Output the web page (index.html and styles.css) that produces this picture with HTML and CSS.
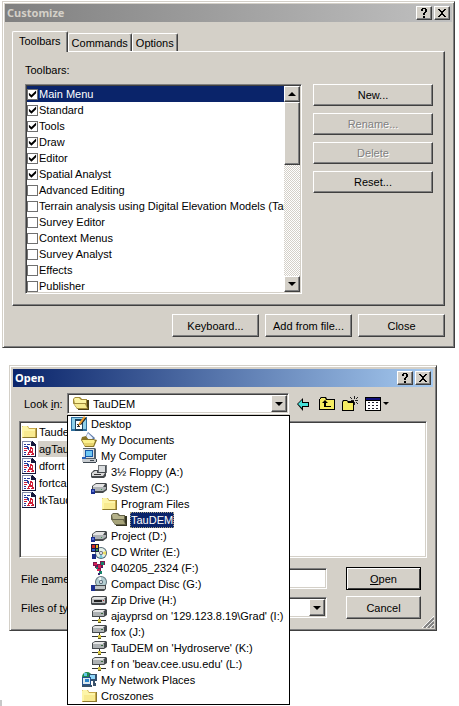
FILE: index.html
```html
<!DOCTYPE html>
<html lang="en">
<head>
<meta charset="utf-8">
<title>Customize toolbars</title>
<link rel="stylesheet" href="styles.css">
</head>
<body>
<svg class="sprite" aria-hidden="true">
  <symbol id="folder" viewBox="0 0 16 16">
    <path fill="#c9a94a" d="M1 2h6l1 2h7v10H1z"/>
    <path fill="#fdf5a8" d="M1 3l1-1h4l2 3h6v8H1z"/>
    <path fill="#f8ea90" d="M3 7h11v6H3z"/>
    <path fill="#8b7a30" d="M2 14h13v-1H2zM15 4h1v10h-1z"/>
  </symbol>
  <symbol id="folder-open" viewBox="0 0 16 16">
    <path fill="#a08a3a" d="M0 3l2-2h5l2 2h5v8H3L0 7z"/>
    <path fill="#fbf3a2" d="M1 3l1-1h4l2 2h5v4H2z"/>
    <path fill="#4a3f14" d="M14 4h2v10H5v-1h9z"/>
    <path fill="#a08a3a" d="M0 7h13l2 6H4z"/>
    <path fill="#f6ea8e" d="M1 8h11l2 4H4z"/>
  </symbol>
  <symbol id="folder-selected" viewBox="0 0 16 16">
    <path fill="#66644a" d="M0 3l2-2h5l2 2h5v8H3L0 7z"/>
    <path fill="#b5b28a" d="M1 3l1-1h4l2 2h5v4H2z"/>
    <path fill="#33321f" d="M14 4h2v10H5v-1h9z"/>
    <path fill="#66644a" d="M0 7h13l2 6H4z"/>
    <path fill="#a7a47a" d="M1 8h11l2 4H4z"/>
  </symbol>
  <symbol id="desktop" viewBox="0 0 16 16">
    <path fill="#2e6f9e" d="M0 1h16v14H0z"/>
    <path fill="#8fd0ea" d="M1 2h14v11H1z"/>
    <path fill="#1d4461" d="M4 3h8v12H4z"/>
    <path fill="#fff" d="M5 5h6v8H5z"/>
    <path fill="#333" d="M6 8h3v1H6zM6 10h3v1H6z"/>
    <path fill="#f0a030" d="M13 0l2 2-6 7-2 1 1-3z"/>
    <path fill="#222" d="M7 9h1v1H7zM14 2h1v1l-5 6H9z"/>
  </symbol>
  <symbol id="documents" viewBox="0 0 16 16">
    <path fill="#5d7aa8" d="M7 0l7 6-3 5-7-5z"/>
    <path fill="#eef4ff" d="M7 1l5 5-3 3-4-4z"/>
    <path fill="#8a7628" d="M1 5l4-1 2 3h5l4 1-3 7H4L0 8z"/>
    <path fill="#fbf08c" d="M1 8h12l1 1-2 5H4z"/>
    <path fill="#e6d26c" d="M3 11h10l-1 3H4z"/>
  </symbol>
  <symbol id="computer" viewBox="0 0 16 16">
    <path fill="#55606b" d="M2 0h12l1 1v10H2z"/>
    <path fill="#d8dde0" d="M2 1h11v9H2z"/>
    <path fill="#1658a8" d="M4 2h8v7H4z"/>
    <path fill="#6ec8f4" d="M5 3h6v5H5z"/>
    <path fill="#c8ccd0" d="M1 11h14v3H1z"/>
    <path fill="#3c464f" d="M2 14h13v1H2zM15 11h1v3h-1zM9 12h4v1H9z"/>
    <path fill="#2a61ba" d="M1 9h4v2H1z"/>
  </symbol>
  <symbol id="floppy" viewBox="0 0 16 16">
    <path fill="#707478" d="M7 1h9v8H7z"/>
    <path fill="#d9dcde" d="M8 2h6v6H8z"/>
    <path fill="#4a5056" d="M14 2h1v6h-1z"/>
    <path fill="#45494c" d="M0 9l3-3h4v2h8v4l-2 2H1l-1-1z"/>
    <path fill="#d8d8d8" d="M1 9l3-2h2v2h8l-2 3H1z"/>
    <path fill="#333" d="M3 10h7v1H3z"/>
  </symbol>
  <symbol id="disk" viewBox="0 0 16 16">
    <path fill="#45494c" d="M1 6l4-3h10l1 1v6l-4 3H1z"/>
    <path fill="#e4e4e4" d="M2 6l3-2h9l-2 3H2z"/>
    <path fill="#aeb2b5" d="M2 7h13v2l-3 2H2z"/>
    <path fill="#1b2f90" d="M0 9h4v5H0z"/>
    <path fill="#596fcf" d="M1 10h2v2H1z"/>
    <path fill="#3f9f51" d="M10 9h1v1h-1z"/>
  </symbol>
  <symbol id="cdwriter" viewBox="0 0 16 16">
    <circle cx="10" cy="9" r="6" fill="#556a78"/>
    <circle cx="10" cy="9" r="5" fill="#e5f0e7"/>
    <path fill="#e8dc63" d="M10 9l5-2v4z"/>
    <path fill="#77c9d7" d="M10 9l2 5H8z"/>
    <circle cx="10" cy="9" r="2" fill="#667"/>
    <circle cx="10" cy="9" r="1" fill="#fff"/>
    <path fill="#161b3d" d="M0 0h8v8H0z"/>
    <path fill="#d42a24" d="M1 1h3v3H1z"/>
    <path fill="#edb528" d="M5 1h2v3H5z"/>
    <path fill="#315bcc" d="M1 5h3v2H1z"/>
    <path fill="#2d934b" d="M5 5h2v2H5z"/>
    <path fill="#172b87" d="M1 10h4v5H1z"/>
  </symbol>
  <symbol id="volume" viewBox="0 0 16 16">
    <path fill="#7a174e" d="M2 2h4v2h3V1h5v4h-2v3h-2v3H7V8H4V6H2z"/>
    <path fill="#d82052" d="M3 3h3v2H3zM7 5h3v3H7zM6 9h3v2H6z"/>
    <path fill="#17826a" d="M10 2h3v3h-3zM5 7h2v2H5zM8 11h3v3H8z"/>
    <path fill="#37256d" d="M6 5h1v2H6zM10 7h2v1h-2zM7 13h2v2H7z"/>
  </symbol>
  <symbol id="compact" viewBox="0 0 16 16">
    <circle cx="10" cy="6" r="6" fill="#60747d"/>
    <circle cx="10" cy="6" r="5" fill="#b4ced2"/>
    <path fill="#f0f5f5" d="M10 6l-3-4 3-1z"/>
    <circle cx="10" cy="6" r="2" fill="#567"/>
    <circle cx="10" cy="6" r="1" fill="#fff"/>
    <path fill="#45494c" d="M2 9h13v4l-2 2H2z"/>
    <path fill="#bfc4c6" d="M3 10h11v3H3z"/>
    <path fill="#1b2f90" d="M0 9h4v6H0z"/>
  </symbol>
  <symbol id="zip" viewBox="0 0 16 16">
    <path fill="#45494c" d="M0 6l2-2h13l1 1v6l-2 2H1l-1-1z"/>
    <path fill="#e4e4e4" d="M1 6l2-1h12l-2 2H1z"/>
    <path fill="#b8bbbd" d="M1 7h13v4H1z"/>
    <path fill="#222" d="M3 8h8v2H3z"/>
    <path fill="#b33" d="M12 8h1v1h-1z"/>
  </symbol>
  <symbol id="netdrive" viewBox="0 0 16 16">
    <path fill="#45494c" d="M1 3l3-2h11l1 1v5l-3 2H1z"/>
    <path fill="#e6e6e6" d="M2 3l2-1h10l-2 2H2z"/>
    <path fill="#adb1b3" d="M2 4h11v4H2z"/>
    <path fill="#3a6b3e" d="M10 5h2v1h-2z"/>
    <path fill="#333" d="M8 9h1v3H8zM1 12h14v1H1z"/>
    <path fill="#d5c540" d="M7 11h3v3H7z"/>
    <path fill="#5c5520" d="M7 14h3v1H7z"/>
  </symbol>
  <symbol id="network" viewBox="0 0 16 16">
    <circle cx="6" cy="5" r="5" fill="#1f8a50"/>
    <path fill="#62c8e8" d="M3 1h3v3H3z"/>
    <path fill="#33506e" d="M8 2h8v7H8z"/>
    <path fill="#8ed6f8" d="M9 3h5v4H9z"/>
    <path fill="#23528d" d="M1 5h9v8H1z"/>
    <path fill="#d9e7ef" d="M2 6h7v6H2z"/>
    <path fill="#2984ca" d="M4 7h4v3H4z"/>
    <path fill="#38516a" d="M1 13h10v2H1zM12 9h2v2h1v3h-3z"/>
  </symbol>
  <symbol id="file" viewBox="0 0 16 16">
    <path fill="#8088a8" d="M1 0h10v1H2v14H1z"/>
    <path fill="#fff" d="M2 1h9v3h3v11H2z"/>
    <path fill="#15183c" d="M11 0h1v1h1v1h1v1h1v13H1v-1h13V5h-4V1h1z"/>
    <path fill="#283c9c" d="M3 3h2v1H3zM6 3h3v1H6zM3 5h4v1H3zM3 11h2v1H3zM3 13h2v1H3z"/>
    <path fill="#d01f38" d="M3 7h3v1H3zM3 9h3v1H3z"/>
    <path fill="#283c9c" d="M6 6h2v2H6zM7 8h1v1H7z"/>
    <path fill="#d01f38" d="M9 6h2v1h1v5h1v2h-3v-1h1v-1H8v1h1v1H6v-1h1v-2h1V9h1z"/>
    <path fill="#fff" d="M10 8h1v2h-1z"/>
  </symbol>
  <symbol id="back" viewBox="0 0 16 16">
    <path fill="#000" d="M1 8l6-6v4h6v5H7v4z"/>
    <path fill="#45e0da" d="M2 8l4-4v3h6v3H6v2z"/>
  </symbol>
  <symbol id="up" viewBox="0 0 16 16">
    <path fill="#000" d="M1 2l1-1h5l1 2h8v11H0V3h1z"/>
    <path fill="#f5ec62" d="M2 2h4l1 2h8v9H1V3h1z"/>
    <path fill="#000" d="M3 7l3-3 3 3H7v3h5v1H5V7z"/>
  </symbol>
  <symbol id="newfolder" viewBox="0 0 16 16">
    <path fill="#000" d="M0 6l1-2h4l1 1h6v10H0z"/>
    <path fill="#f5ec62" d="M1 6l1-1h3l1 2h5v7H1z"/>
    <path fill="#222" d="M12 0h1v3h-1zM8 1h1v1H8zM9 2h1v1H9zM15 1h1v1h-1zM14 2h1v1h-1zM13 4h3v1h-3zM9 4h3v1H9zM12 6h1v3h-1zM14 6h1v1h-1zM15 7h1v1h-1z"/>
  </symbol>
  <symbol id="views" viewBox="0 0 16 16">
    <path fill="#000" d="M0 1h16v14H0z"/>
    <path fill="#10107a" d="M1 2h14v2H1z"/>
    <path fill="#fff" d="M1 5h14v9H1z"/>
    <path fill="#223" d="M3 6h2v1H3zM7 6h2v1H7zM11 6h2v1h-2zM3 9h2v1H3zM7 9h2v1H7zM11 9h2v1h-2zM3 12h2v1H3zM7 12h2v1H7zM11 12h2v1h-2z"/>
  </symbol>
  <symbol id="help" viewBox="0 0 12 12">
    <path fill="#000" d="M3 2h1V1h4v1h1v3H8v1H7v2H5V6h1V5h1V2H5v2H3zM5 9h2v2H5z"/>
  </symbol>
  <symbol id="close" viewBox="0 0 12 12">
    <path fill="#000" d="M2 2h2v1h1v1h2V3h1V2h2v1H9v1H8v1H7v2h1v1h1v1h1v1H8V9H7V8H5v1H4v1H2V9h1V8h1V7h1V5H4V4H3V3H2z"/>
  </symbol>
</svg>

<section class="dialog customize" aria-label="Customize">
  <header class="titlebar inactive">
    <h1>Customize</h1>
    <button class="caption" aria-label="Help"><svg><use href="#help"/></svg></button>
    <button class="caption" aria-label="Close window"><svg><use href="#close"/></svg></button>
  </header>
  <div class="customize-body">
    <div class="tabs" role="tablist">
      <button class="tab active" role="tab" aria-selected="true">Toolbars</button>
      <button class="tab" role="tab">Commands</button>
      <button class="tab" role="tab">Options</button>
    </div>
    <div class="panel" role="tabpanel">
      <p class="caption-text">Toolbars:</p>
      <div class="panel-row">
        <div class="listbox">
          <div class="checks">
            <label class="current"><input type="checkbox" checked>Main Menu</label>
            <label><input type="checkbox" checked>Standard</label>
            <label><input type="checkbox" checked>Tools</label>
            <label><input type="checkbox" checked>Draw</label>
            <label><input type="checkbox" checked>Editor</label>
            <label><input type="checkbox" checked>Spatial Analyst</label>
            <label><input type="checkbox">Advanced Editing</label>
            <label><input type="checkbox">Terrain analysis using Digital Elevation Models (TauDEM)</label>
            <label><input type="checkbox">Survey Editor</label>
            <label><input type="checkbox">Context Menus</label>
            <label><input type="checkbox">Survey Analyst</label>
            <label><input type="checkbox">Effects</label>
            <label><input type="checkbox">Publisher</label>
          </div>
          <div class="scrollbar">
            <button class="arrow up" aria-label="Scroll up"></button>
            <div class="thumb"></div>
            <button class="arrow down" aria-label="Scroll down"></button>
          </div>
        </div>
        <div class="side-buttons">
          <button class="btn">New...</button>
          <button class="btn" disabled>Rename...</button>
          <button class="btn" disabled>Delete</button>
          <button class="btn">Reset...</button>
        </div>
      </div>
    </div>
    <footer class="actions">
      <button class="btn">Keyboard...</button>
      <button class="btn">Add from file...</button>
      <button class="btn">Close</button>
    </footer>
  </div>
</section>

<section class="dialog open" aria-label="Open">
  <header class="titlebar">
    <h1>Open</h1>
    <button class="caption" aria-label="Help"><svg><use href="#help"/></svg></button>
    <button class="caption" aria-label="Close window"><svg><use href="#close"/></svg></button>
  </header>
  <div class="open-body">
    <div class="look-row">
      <label for="look">Look <u>i</u>n:</label>
      <div class="combo look">
        <svg class="icon"><use href="#folder-open"/></svg>
        <select id="look"><option>TauDEM</option></select>
        <span class="arrow down"></span>
        <ul class="popup" role="listbox" aria-label="Folders">
          <li role="option"><svg class="icon"><use href="#desktop"/></svg><span>Desktop</span></li>
          <li class="l1" role="option"><svg class="icon"><use href="#documents"/></svg><span>My Documents</span></li>
          <li class="l1" role="option"><svg class="icon"><use href="#computer"/></svg><span>My Computer</span></li>
          <li class="l2" role="option"><svg class="icon"><use href="#floppy"/></svg><span>3½ Floppy (A:)</span></li>
          <li class="l2" role="option"><svg class="icon"><use href="#disk"/></svg><span>System (C:)</span></li>
          <li class="l3" role="option"><svg class="icon"><use href="#folder"/></svg><span>Program Files</span></li>
          <li class="l4" role="option" aria-selected="true"><svg class="icon"><use href="#folder-selected"/></svg><span>TauDEM</span></li>
          <li class="l2" role="option"><svg class="icon"><use href="#disk"/></svg><span>Project (D:)</span></li>
          <li class="l2" role="option"><svg class="icon"><use href="#cdwriter"/></svg><span>CD Writer (E:)</span></li>
          <li class="l2" role="option"><svg class="icon"><use href="#volume"/></svg><span>040205_2324 (F:)</span></li>
          <li class="l2" role="option"><svg class="icon"><use href="#compact"/></svg><span>Compact Disc (G:)</span></li>
          <li class="l2" role="option"><svg class="icon"><use href="#zip"/></svg><span>Zip Drive (H:)</span></li>
          <li class="l2" role="option"><svg class="icon"><use href="#netdrive"/></svg><span>ajayprsd on '129.123.8.19\Grad' (I:)</span></li>
          <li class="l2" role="option"><svg class="icon"><use href="#netdrive"/></svg><span>fox (J:)</span></li>
          <li class="l2" role="option"><svg class="icon"><use href="#netdrive"/></svg><span>TauDEM on 'Hydroserve' (K:)</span></li>
          <li class="l2" role="option"><svg class="icon"><use href="#netdrive"/></svg><span>f on 'beav.cee.usu.edu' (L:)</span></li>
          <li class="l1" role="option"><svg class="icon"><use href="#network"/></svg><span>My Network Places</span></li>
          <li class="l1" role="option"><svg class="icon"><use href="#folder"/></svg><span>Croszones</span></li>
        </ul>
      </div>
      <div class="tools">
        <button aria-label="Back"><svg class="icon"><use href="#back"/></svg></button>
        <button aria-label="Up one level"><svg class="icon"><use href="#up"/></svg></button>
        <button aria-label="New folder"><svg class="icon"><use href="#newfolder"/></svg></button>
        <button class="menu" aria-label="Views"><svg class="icon"><use href="#views"/></svg></button>
      </div>
    </div>
    <ul class="files">
      <li><svg class="icon"><use href="#folder"/></svg><span>Taude</span></li>
      <li class="marked"><svg class="icon"><use href="#file"/></svg><span>agTau</span></li>
      <li><svg class="icon"><use href="#file"/></svg><span>dforrt</span></li>
      <li><svg class="icon"><use href="#file"/></svg><span>fortca</span></li>
      <li><svg class="icon"><use href="#file"/></svg><span>tkTaud</span></li>
    </ul>
    <div class="form">
      <label for="name">File <u>n</u>ame:</label>
      <input id="name" type="text">
      <button class="btn default"><u>O</u>pen</button>
      <label for="type">Files of <u>t</u>ype:</label>
      <div class="combo">
        <select id="type"><option></option></select>
        <span class="arrow down"></span>
      </div>
      <button class="btn">Cancel</button>
    </div>
  </div>
  <svg class="grip" viewBox="0 0 12 12" aria-hidden="true">
    <path stroke="#fff" d="M0 12L12 0M4 12l8-8M8 12l4-4"/>
    <path stroke="#808080" stroke-width="2" d="M2 12L12 2M6 12l6-6M10 12l2-2"/>
  </svg>
</section>
</body>
</html>
```
FILE: styles.css
```css
* {
  box-sizing: border-box;
}

body {
  min-height: 100vh;
  margin: 0;
  padding: 1px 4px 0 2px;
  background: #fff linear-gradient(#c8c8c8, #c8c8c8) left bottom / 2px 6px no-repeat;
  color: #000;
  font: 11px/16px "Liberation Sans", Arial, sans-serif;
}

button,
input,
select {
  font: inherit;
  color: inherit;
  margin: 0;
  border-radius: 0;
}

ul {
  list-style: none;
  margin: 0;
  padding: 0;
}

.sprite {
  position: absolute;
  width: 0;
  height: 0;
}

.icon {
  width: 16px;
  height: 16px;
  flex: none;
  display: block;
}

/* Window frame */
.dialog {
  background: #d4d0c8;
  border: 1px solid;
  border-color: #d4d0c8 #404040 #404040 #d4d0c8;
  box-shadow: inset 1px 1px #fff, inset -1px -1px #808080;
  padding: 2px;
}

.titlebar {
  display: flex;
  align-items: center;
  gap: 2px;
  height: 18px;
  padding: 0 2px;
  background: linear-gradient(90deg, #0a246a, #a6caf0);
  color: #fff;
}

.titlebar.inactive {
  background: linear-gradient(90deg, #808080, #c0c0c0);
  color: #d4d0c8;
}

.titlebar h1 {
  flex: 1;
  margin: 0;
  font: bold 11px/16px "Noto Sans", Tahoma, sans-serif;
}

.caption {
  width: 16px;
  height: 14px;
  padding: 0;
  display: grid;
  place-items: center;
}

.caption svg {
  width: 12px;
  height: 12px;
}

/* Raised surfaces */
.btn,
.caption,
.arrow,
.thumb {
  background: #d4d0c8;
  border: 1px solid;
  border-color: #fff #404040 #404040 #fff;
  box-shadow: inset -1px -1px #808080;
}

.btn {
  height: 22px;
  padding: 0;
}

.btn:disabled {
  color: #808080;
  text-shadow: 1px 1px #fff;
}

.btn.default {
  border-color: #000;
  box-shadow: inset 1px 1px #fff, inset -1px -1px #404040;
}

.arrow {
  width: 16px;
  height: 16px;
  padding: 0;
  display: grid;
  place-items: center;
}

.arrow::before {
  content: "";
  border: 4px solid transparent;
  border-bottom-width: 0;
  border-top-color: #000;
}

.arrow.up::before {
  border-width: 0 4px 4px;
  border-bottom-color: #000;
}

/* Sunken surfaces */
.listbox,
.files,
.combo,
.form input {
  background: #fff;
  border: 1px solid;
  border-color: #808080 #fff #fff #808080;
  box-shadow: inset 1px 1px #404040, inset -1px -1px #d4d0c8;
}

/* Customize dialog */
.customize-body {
  padding: 9px 7px 8px;
}

.tabs {
  display: flex;
  align-items: flex-end;
}

.tab {
  height: 18px;
  padding: 0 3px;
  background: #d4d0c8;
  border: 1px solid;
  border-color: #fff #404040 transparent #fff;
  border-bottom: 0;
  border-radius: 2px 2px 0 0;
  box-shadow: inset -1px 0 #808080;
}

.tab.active {
  height: 21px;
  padding: 0 6px 2px;
  margin-bottom: -1px;
  z-index: 1;
}

.panel {
  border: 1px solid;
  border-color: #fff #404040 #404040 #fff;
  box-shadow: inset -1px -1px #808080;
  padding: 10px 11px 11px 12px;
}

.caption-text {
  margin: 0 0 6px;
}

.panel-row {
  display: flex;
  gap: 11px;
}

.listbox {
  flex: 1;
  min-width: 0;
  height: 210px;
  padding: 1px;
  display: flex;
}

.checks {
  flex: 1;
  min-width: 0;
  overflow: hidden;
}

.checks label {
  display: flex;
  align-items: center;
  gap: 1px;
  height: 16px;
  white-space: nowrap;
}

.checks .current {
  background: #0a246a;
  color: #fff;
}

.checks input {
  appearance: none;
  flex: none;
  width: 11px;
  height: 11px;
  background: #fff;
  border: 1px solid #707070;
}

.checks input:checked::before {
  content: "";
  display: block;
  width: 9px;
  height: 9px;
  background: #000;
  clip-path: polygon(10% 35%, 38% 60%, 90% 10%, 90% 42%, 38% 92%, 10% 65%);
}

.scrollbar {
  width: 16px;
  display: flex;
  flex-direction: column;
  background: repeating-conic-gradient(#fff 0 25%, #d4d0c8 0 50%) 0 0 / 2px 2px;
}

.thumb {
  height: 63px;
  margin-bottom: auto;
}

.side-buttons {
  width: 120px;
  display: flex;
  flex-direction: column;
  gap: 7px;
}

.actions {
  display: flex;
  justify-content: flex-end;
  gap: 6px;
  margin-top: 8px;
}

.actions .btn {
  width: 87px;
  height: 23px;
}

/* Open dialog */
.open {
  position: relative;
  margin: 17px 18px 0 7px;
  padding: 3px;
}

.open-body {
  padding: 6px 6px 8px;
}

.look-row {
  display: flex;
  align-items: center;
  padding-left: 5px;
}

.look-row > label {
  width: 43px;
}

.combo {
  display: flex;
  align-items: center;
  height: 21px;
  padding: 1px;
}

.combo select {
  appearance: none;
  flex: 1;
  min-width: 0;
  height: 16px;
  padding: 0 4px;
  background: none;
  border: 0;
}

.combo .arrow {
  height: 17px;
}

.look {
  position: relative;
  flex: 1;
  padding-left: 5px;
}

.popup {
  position: absolute;
  z-index: 2;
  top: 21px;
  left: -1px;
  right: -2px;
  padding: 0 3px;
  background: #fff;
  border: 1px solid #000;
}

.popup li {
  display: flex;
  gap: 3px;
  height: 16px;
  white-space: nowrap;
}

.popup span {
  padding: 0 1px;
}

.popup .l1 {
  padding-left: 10px;
}

.popup .l2 {
  padding-left: 20px;
}

.popup .l3 {
  padding-left: 30px;
}

.popup .l4 {
  padding-left: 40px;
}

.popup [aria-selected="true"] span {
  background: #0a246a;
  color: #fff;
  outline: 1px dotted #a6a080;
  outline-offset: -1px;
}

.tools {
  display: flex;
  gap: 7px;
  width: 138px;
  padding-left: 7px;
}

.tools button {
  padding: 0;
  background: none;
  border: 0;
}

.tools .menu {
  display: flex;
  align-items: center;
  gap: 2px;
}

.menu::after {
  content: "";
  border: 3px solid transparent;
  border-bottom-width: 0;
  border-top-color: #000;
}

.files {
  height: 137px;
  margin-top: 7px;
  padding: 1px;
}

.files li {
  display: flex;
  align-items: center;
  gap: 1px;
  height: 17px;
}

.files span {
  padding: 0 1px;
}

.files .marked span {
  background: #d4d0c8;
}

.form {
  display: grid;
  grid-template-columns: 88px 1fr 75px;
  column-gap: 19px;
  row-gap: 6px;
  align-items: center;
  padding: 9px 6px 0 2px;
}

.form label {
  white-space: nowrap;
}

.form input {
  width: 100%;
  min-width: 0;
  height: 21px;
}

.form .btn {
  height: 23px;
}

.grip {
  position: absolute;
  right: 2px;
  bottom: 2px;
  width: 12px;
  height: 12px;
}
```
